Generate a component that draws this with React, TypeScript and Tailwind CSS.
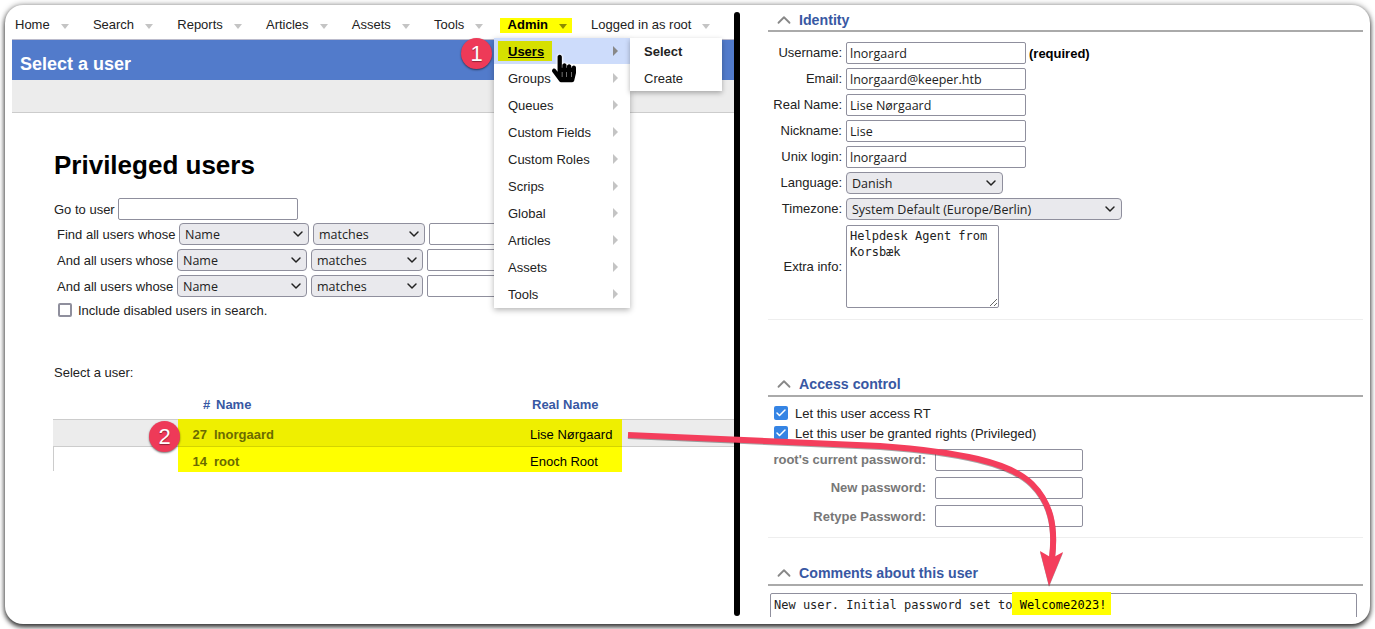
import { ChevronDown, ChevronUp, Check } from 'lucide-react';
import { FaHandPointer } from 'react-icons/fa';

const sans = "font-['Liberation_Sans',Arial,sans-serif]";
const field = "font-['Open_Sans','Noto_Sans',sans-serif]";
const mono = "font-['DejaVu_Sans_Mono',monospace]";

const navItems = ['Home', 'Search', 'Reports', 'Articles', 'Assets', 'Tools'];
const menuItems = ['Groups', 'Queues', 'Custom Fields', 'Custom Roles', 'Scrips', 'Global', 'Articles', 'Assets', 'Tools'];
const searchRows = [
  { label: 'Find all users whose', width: 'w-[118px]' },
  { label: 'And all users whose', width: 'w-[116px]' },
  { label: 'And all users whose', width: 'w-[116px]' },
];
const identityRows = [
  { label: 'Username:', value: 'lnorgaard', note: true },
  { label: 'Email:', value: 'lnorgaard@keeper.htb' },
  { label: 'Real Name:', value: 'Lise Nørgaard' },
  { label: 'Nickname:', value: 'Lise' },
  { label: 'Unix login:', value: 'lnorgaard' },
];
const passwordRows = ["root's current password:", 'New password:', 'Retype Password:'];

function Caret({ className }: { className: string }) {
  return <span className={`ml-[11px] mt-[3px] h-0 w-0 border-x-[4.5px] border-t-[5px] border-x-transparent ${className}`} />;
}

function Select({ value, width, pad = 'pr-[2px]' }: { value: string; width: string; pad?: string }) {
  return (
    <div className={`flex h-[22px] shrink-0 items-center justify-between rounded-[4px] border border-[#8f8f9d] bg-[#e9e9ed] pl-[5px] text-[12.5px] text-[#222] ${pad} ${field} ${width}`}>
      <span className="pt-[2px]">{value}</span>
      <ChevronDown className="h-[16px] w-[16px] text-[#222]" strokeWidth={2.2} />
    </div>
  );
}

function TextBox({ value = '', width }: { value?: string; width: string }) {
  return (
    <input
      readOnly
      defaultValue={value}
      className={`h-[22px] shrink-0 rounded-[2px] border border-[#8f8f9d] bg-white px-[3px] text-[12.5px] text-[#222] outline-none ${field} ${width}`}
    />
  );
}

function SectionHeader({ title, tight }: { title: string; tight?: boolean }) {
  return (
    <div className={`box-content flex h-[16px] items-center border-b-2 border-[#aaaaaa] ${tight ? 'pb-[2px]' : 'pb-[3px]'}`}>
      <ChevronUp className="ml-[5px] h-[22px] w-[22px] text-[#888]" strokeWidth={2} />
      <span className="ml-[4px] pt-[2px] text-[14.2px] font-bold text-[#3858a3]">{title}</span>
    </div>
  );
}

function Badge({ n, className }: { n: number; className: string }) {
  return (
    <div className={`absolute flex h-[31px] w-[31px] items-center justify-center rounded-full bg-[#ee3a58] text-[22px] text-white shadow-[0_1px_2px_rgba(0,0,0,0.55)] [text-shadow:0_1px_1px_rgba(0,0,0,0.4)] ${className}`}>
      {n}
    </div>
  );
}

function MenuArrow({ dark }: { dark?: boolean }) {
  return <span className={`h-0 w-0 border-y-[5px] border-l-[5px] border-y-transparent ${dark ? 'border-l-[#888]' : 'border-l-[#c4c4c4]'}`} />;
}

export default function App() {
  return (
    <div className={`h-[629px] w-[1375px] overflow-hidden bg-white pl-[5px] pt-[5px] text-[13px] text-[#222] ${sans}`}>
      <div className="relative flex h-[619px] w-[1365px] rounded-[18px] bg-white shadow-[0_3px_5px_rgba(0,0,0,0.75),0_0_6px_rgba(0,0,0,0.4)]">
        {/* Left pane */}
        <div className="h-[612px] w-[729px] shrink-0 overflow-hidden pl-[7px]">
          <div className="flex h-[35px] items-center border-b border-[#bbc] pl-[3px] pt-[6px]">
            {navItems.map((item) => (
              <div key={item} className="mr-[24.2px] flex items-center">
                <span>{item}</span>
                <Caret className="border-t-[#c4c4c4]" />
              </div>
            ))}
            <div className="-ml-[8px] mr-[19px] flex h-[15px] items-center bg-[#ffff00] pl-[8px] pr-[5px] font-bold text-black">
              <span>Admin</span>
              <Caret className="border-t-[#8c8c00]" />
            </div>
            <div className="flex items-center">
              <span>Logged in as root</span>
              <Caret className="border-t-[#c4c4c4]" />
            </div>
          </div>
          <div className="flex h-[40px] items-center bg-[#527bcb] pl-[8px] pt-[9px] text-[18px] font-bold text-white">Select a user</div>
          <div className="h-[33px] border-b border-[#cccccc] bg-[#ececec]" />

          <div className="pl-[42px]">
            <h2 className="mt-[37px] text-[26px] font-bold leading-[30px] text-black">Privileged users</h2>
            <div className="mt-[18px] flex h-[22px] items-center gap-[4px]">
              <span className="w-[60px] whitespace-nowrap pt-[2px]">Go to user</span>
              <TextBox width="w-[180px]" />
            </div>
            <div className="mt-[3px] flex flex-col gap-[4px] pl-[3px]">
              {searchRows.map((row, i) => (
                <div key={i} className="flex h-[22px] items-center gap-[4px]">
                  <span className={`whitespace-nowrap pt-[2px] ${row.width}`}>{row.label}</span>
                  <Select value="Name" width="w-[130px]" />
                  <Select value="matches" width="w-[112px]" />
                  <TextBox width="w-[180px]" />
                </div>
              ))}
            </div>
            <div className="mt-[6px] flex h-[14px] items-center gap-[6px] pl-[4px]">
              <span className="h-[14px] w-[14px] rounded-[2px] border-2 border-[#8f8f9d] bg-white" />
              <span className="pt-[2px]">Include disabled users in search.</span>
            </div>
            <p className="mt-[48px] leading-[16px]">Select a user:</p>
            <div className="mt-[16px] flex h-[16px] items-center font-bold text-[#3858a3]">
              <span className="ml-[149px] w-[7px]">#</span>
              <span className="ml-[6px] w-[316px]">Name</span>
              <span>Real Name</span>
            </div>
          </div>

          <div className="ml-[41px] mt-[6px]">
            <div className="flex h-[28px] border-y border-[#cccccc] bg-[#ececec]">
              <div className="w-[125px] shrink-0" />
              <div className="-my-px flex h-[28px] w-[444px] items-center border-b border-[#d4d400] bg-[#efef00] pt-[5px]">
                <span className="w-[29px] text-right font-bold text-[#6b6b00]">27</span>
                <span className="ml-[7px] w-[316px] font-bold text-[#6b6b00]">lnorgaard</span>
                <span className="text-black">Lise Nørgaard</span>
              </div>
            </div>
            <div className="flex h-[24px] border-l border-[#cccccc]">
              <div className="w-[124px] shrink-0" />
              <div className="flex h-[25px] w-[444px] items-center bg-[#ffff00] pt-[4px]">
                <span className="w-[29px] text-right font-bold text-[#6b6b00]">14</span>
                <span className="ml-[7px] w-[316px] font-bold text-[#6b6b00]">root</span>
                <span className="text-black">Enoch Root</span>
              </div>
            </div>
          </div>
        </div>

        {/* Divider */}
        <div className="mt-[7px] h-[604px] w-[6px] shrink-0 rounded-full bg-black" />

        {/* Right pane */}
        <div className="ml-[28px] h-[612px] w-[595px] shrink-0 overflow-hidden">
          <div className="pt-[7px]">
            <SectionHeader title="Identity" tight />
          </div>
          <div className="mt-[10px] flex flex-col gap-[4px]">
            {identityRows.map((row) => (
              <div key={row.label} className="flex h-[22px] items-center gap-[4px]">
                <span className="w-[74px] text-right">{row.label}</span>
                <TextBox value={row.value} width="w-[180px]" />
                {row.note && <b className="-ml-[1px] pt-[2px] text-black">(required)</b>}
              </div>
            ))}
            <div className="flex h-[22px] items-center gap-[4px]">
              <span className="w-[74px] text-right">Language:</span>
              <Select value="Danish" width="w-[157px]" pad="pr-[3px]" />
            </div>
            <div className="flex h-[22px] items-center gap-[4px]">
              <span className="w-[74px] text-right">Timezone:</span>
              <Select value="System Default (Europe/Berlin)" width="w-[276px]" pad="pr-[3px]" />
            </div>
            <div className="mt-[1px] flex h-[83px] items-center gap-[4px]">
              <span className="w-[74px] text-right">Extra info:</span>
              <textarea
                readOnly
                defaultValue={'Helpdesk Agent from\nKorsbæk'}
                className={`h-[83px] w-[153px] rounded-[2px] border border-[#8f8f9d] px-[3px] py-[3px] text-[12px] leading-[15.5px] outline-none ${mono}`}
              />
            </div>
          </div>
          <div className="mt-[11px] border-b border-[#eeeeee]" />

          <div className="mt-[56px]">
            <SectionHeader title="Access control" />
          </div>
          <div className="ml-[6px] mt-[9px] flex flex-col gap-[6px]">
            {['Let this user access RT', 'Let this user be granted rights (Privileged)'].map((label) => (
              <div key={label} className="flex h-[14px] items-center gap-[7px]">
                <span className="flex h-[14px] w-[14px] items-center justify-center rounded-[2px] bg-[#3584e4]">
                  <Check className="h-[12px] w-[12px] text-white" strokeWidth={3} />
                </span>
                <span className="pt-[2px]">{label}</span>
              </div>
            ))}
          </div>
          <div className="mt-[9px] flex flex-col gap-[6px]">
            {passwordRows.map((label, i) => (
              <div key={label} className="flex h-[22px] items-center">
                <span className={`w-[158px] text-right font-bold text-[#777777] ${i === 2 ? 'pt-[2px]' : ''}`}>{label}</span>
                <span className="ml-[9px]">
                  <TextBox width="w-[148px]" />
                </span>
              </div>
            ))}
          </div>
          <div className="mt-[10px] border-b border-[#eeeeee]" />

          <div className="mt-[27px]">
            <SectionHeader title="Comments about this user" />
          </div>
          <div className={`ml-[2px] mt-[7px] h-[40px] w-[587px] rounded-t-[2px] border border-[#8f8f9d] pl-[3px] pt-[4px] text-[12px] leading-[15px] text-[#222] ${mono}`}>
            New user. Initial password set to{' '}
            <span className="-ml-[8px] -mt-[6px] inline-block h-[23px] bg-[#ffff00] pl-[8px] pr-[5px] pt-[6px] align-top text-black">Welcome2023!</span>
          </div>
        </div>

        {/* Overlays: dropdown, annotations */}
        <div className="absolute left-[489px] top-[33px] w-[136px] bg-white shadow-[0_2px_6px_rgba(0,0,0,0.3)]">
          <div className="flex h-[26px] items-center justify-between bg-[#cddcfb] pr-[12px]">
            <div className="ml-[4px] flex h-[20px] w-[54px] items-center bg-[#d6e000] pl-[10px] pt-[2px] font-bold text-black underline">Users</div>
            <MenuArrow dark />
          </div>
          {menuItems.map((item) => (
            <div key={item} className="flex h-[27px] items-center justify-between pl-[14px] pr-[12px]">
              <span className="pt-[2px]">{item}</span>
              <MenuArrow />
            </div>
          ))}
          <div className="h-[1px]" />
        </div>
        <div className="absolute left-[625px] top-[33px] w-[92px] bg-white pl-[14px] shadow-[0_2px_5px_rgba(0,0,0,0.3)]">
          <div className="flex h-[26px] items-center pt-[2px] font-bold">Select</div>
          <div className="flex h-[27px] items-center pt-[2px]">Create</div>
        </div>

        <Badge n={1} className="left-[456px] top-[33px]" />
        <Badge n={2} className="left-[144px] top-[416px]" />
        <FaHandPointer className="absolute left-[547px] top-[49px] h-[29px] w-[24px] text-black [filter:drop-shadow(0_0_1px_white)_drop-shadow(0_0_1px_white)]" />

        <svg className="pointer-events-none absolute left-0 top-0 h-[619px] w-[1365px] [filter:drop-shadow(0_1px_0.5px_rgba(0,0,0,0.35))]" viewBox="5 5 1365 619" fill="none">
          <path d="M628 435 L 880 446 C 960 452 1010 462 1032 484 C 1050 502 1056 525 1052 558" stroke="#f43e5c" strokeWidth="6" />
          <polygon points="1040,551 1052,558 1063,552 1049,586" fill="#f43e5c" />
        </svg>
      </div>
    </div>
  );
}
